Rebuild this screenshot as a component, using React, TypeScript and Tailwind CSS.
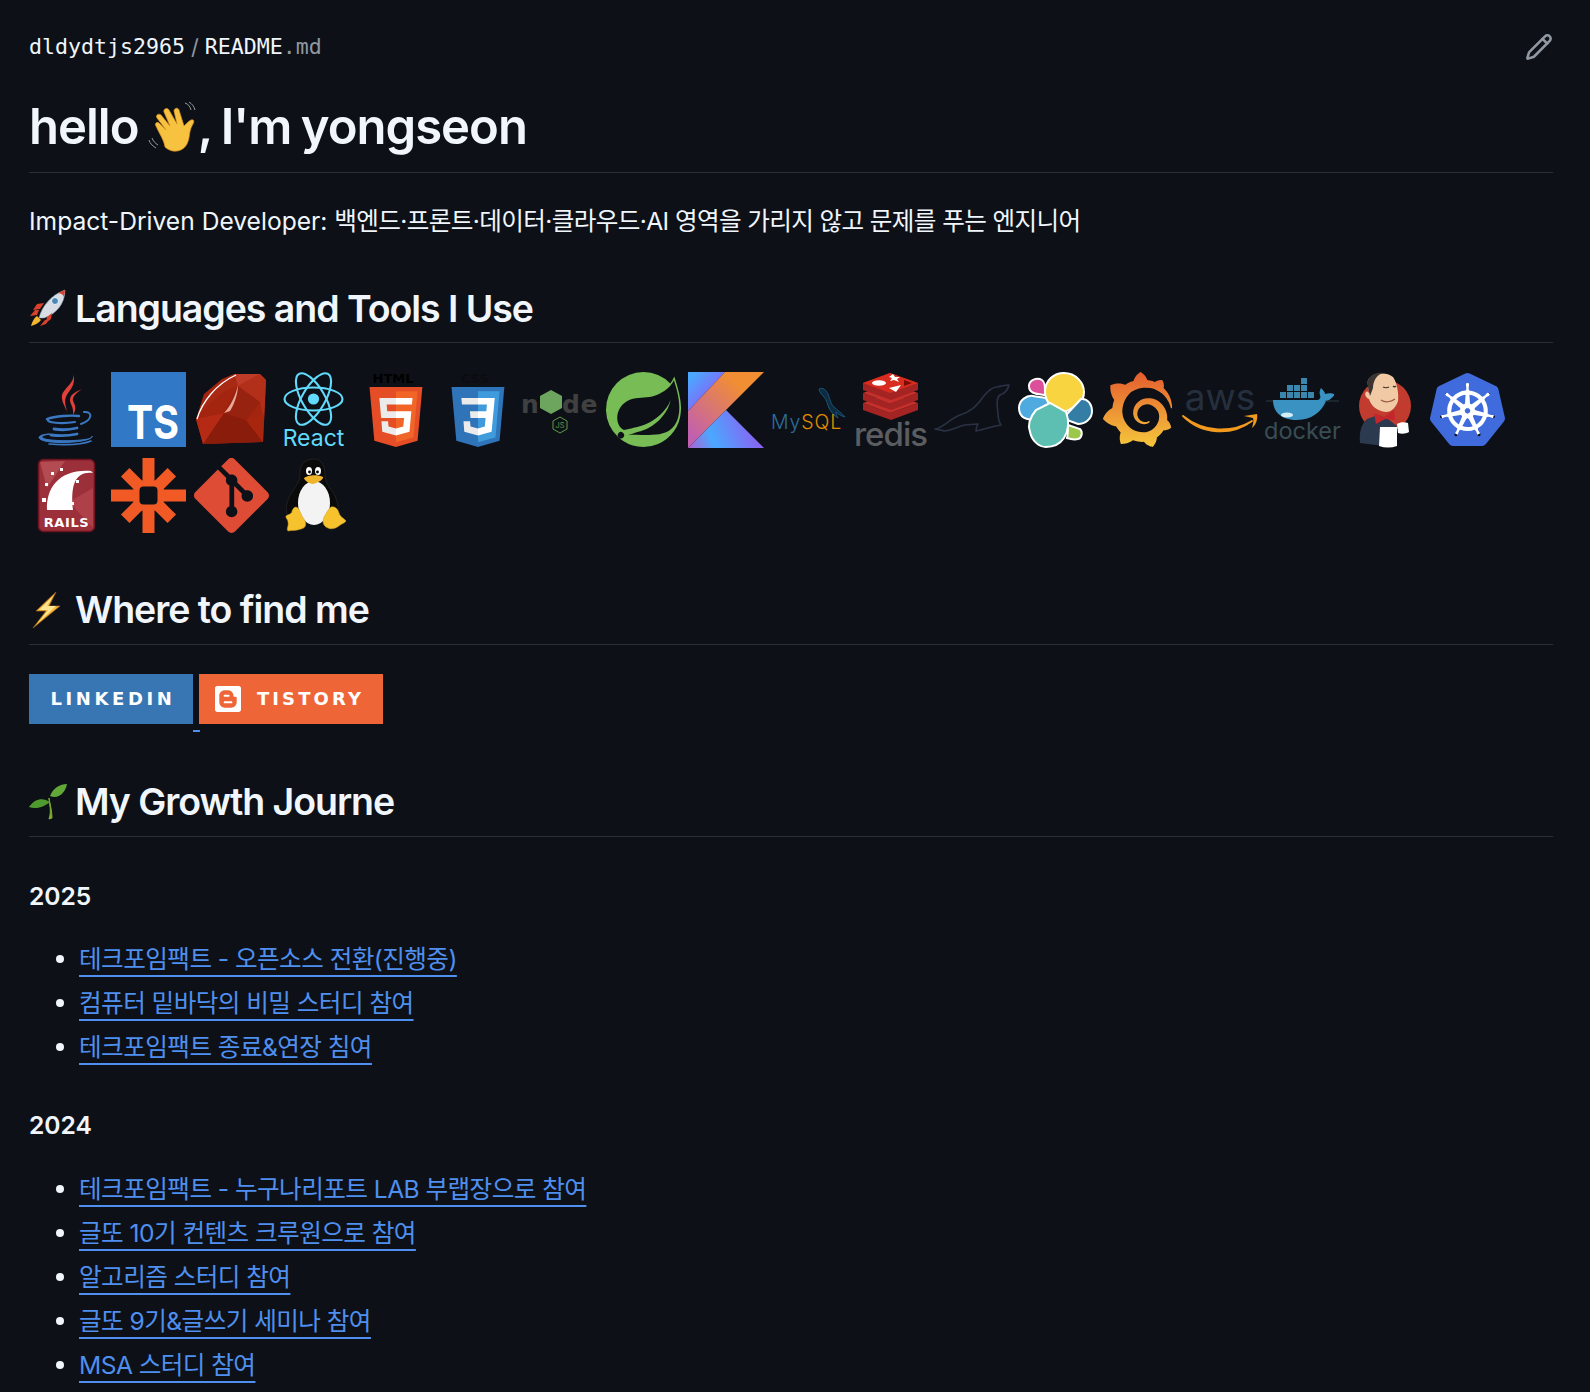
import React from "react";
import { Pencil } from "lucide-react";
import { SiBlogger, SiGit, SiGrafana, SiKubernetes, SiSpring } from "react-icons/si";

const Cell = ({ children }: { children: React.ReactNode }) => (
  <svg viewBox="0 0 75 75" className="w-[75px] h-[75px] shrink-0 overflow-visible">
    {children}
  </svg>
);

const JavaIcon = () => (
  <Cell>
    <path d="M44 1c3 9-9 15-11 22-1 6 3 11 5 17-1-6-3-10-1-15 2-6 11-11 7-24z" fill="#e2403a" />
    <path d="M53 17c-7 3-12 6-12 11 0 4 4 7 3 15 4-6 2-10 0-14-1-4 3-8 9-12z" fill="#e2403a" />
    <g fill="none" stroke="#3b78c2" strokeLinecap="round">
      <path d="M18 47c8-3 24-4 32-3" strokeWidth="2.4" />
      <path d="M55 40c8-1 10 7-3 12" strokeWidth="2" />
      <path d="M19 47c-3 4 14 5 27 3" strokeWidth="2.2" />
      <path d="M25 57c6 1 15 1 23-1" strokeWidth="2.8" />
      <path d="M22 63c8 1 17 1 26-1" strokeWidth="2.8" />
      <path d="M11 67c-4-3 4-5 10-5-7 1-11 3-5 5 12 3 50 2 47-3 1 7-46 9-52 3z" fill="#3b78c2" strokeWidth="1" />
      <path d="M20 72c13 1 32 1 42-3" strokeWidth="1.6" />
    </g>
  </Cell>
);

const TsIcon = () => (
  <Cell>
    <rect x="0" y="0" width="75" height="75" fill="#3178c6" />
    <text x="16" y="67" fontSize="46" fontWeight="700" fill="#fff" textLength="52" lengthAdjust="spacingAndGlyphs" className="font-['Inter',sans-serif]">
      TS
    </text>
  </Cell>
);

const RubyIcon = () => (
  <Cell>
    <polygon points="40,2 66,2 72,8 69,70 9,72 2,47 10,22 28,7" fill="#a3240f" />
    <polygon points="9,72 30,41 52,48 69,70" fill="#8a1c0c" />
    <polygon points="30,41 44,14 66,30 52,48" fill="#97220f" />
    <polygon points="44,14 66,2 72,8 70,50 66,30" fill="#b22f1a" />
    <polygon points="2,47 30,41 9,72" fill="#b52a14" />
    <polygon points="52,48 70,42 69,70" fill="#a8260e" />
    <polygon points="40,2 66,2 44,14" fill="#bd3c28" />
    <path d="M3 46C7 30 20 12 40 3l4 11C28 18 12 34 3 46z" fill="#a92a14" />
    <path d="M3 47C8 30 22 12 42 3" fill="none" stroke="#fff" strokeWidth="1.3" />
    <path d="M44 13c-2 10-8 22-14 28l6-2c5-8 8-18 8-26z" fill="#e9a898" />
  </Cell>
);

const ReactIcon = () => (
  <Cell>
    <g fill="none" stroke="#61dafb" strokeWidth="2.1" transform="translate(37.5 27)">
      <ellipse rx="29" ry="11.5" />
      <ellipse rx="29" ry="11.5" transform="rotate(60)" />
      <ellipse rx="29" ry="11.5" transform="rotate(120)" />
    </g>
    <circle cx="37.5" cy="27" r="5.6" fill="#61dafb" />
    <text x="37.5" y="74" textAnchor="middle" fontSize="23" fill="#61dafb" className="font-['Inter',sans-serif]">
      React
    </text>
  </Cell>
);

const HtmlIcon = () => (
  <Cell>
    <text x="34" y="11" textAnchor="middle" fontSize="13" fontWeight="700" fill="#000" className="font-['DejaVu_Sans',sans-serif]">
      HTML
    </text>
    <g transform="translate(7 15) scale(0.1172 0.117)">
      <path fill="#e44d26" d="M71 460L30 0h451l-41 460-185 52" />
      <path fill="#f16529" d="M256 472l149-41 35-394H256" />
      <path fill="#ebebeb" d="M256 208h-75l-5-58h80V94H114l15 171h127zm0 147l-64-17-4-45h-56l7 89 117 32z" />
      <path fill="#fff" d="M255 208v57h70l-7 73-63 17v59l116-32 16-174zm0-114v56h137l5-56z" />
    </g>
  </Cell>
);

const CssIcon = () => (
  <Cell>
    <text x="34" y="11" textAnchor="middle" fontSize="13" fontWeight="700" fill="#0a0c10" className="font-['DejaVu_Sans',sans-serif]">
      CSS
    </text>
    <g transform="translate(7 15) scale(0.1172 0.117)">
      <path fill="#2f73b8" d="M71 460L30 0h451l-41 460-185 52" />
      <path fill="#3f9bdc" d="M256 472l149-41 35-394H256" />
      <path fill="#ebebeb" d="M256 94H114l5 56h137zm0 114h-69l5 57h64zm0 147l-64-17-4-45h-56l7 89 117 32z" />
      <path fill="#fff" d="M256 94v56h76l-5 58h-71v57h65l-7 73-58 17v59l116-32 27-288z" />
    </g>
  </Cell>
);

const NodeIcon = () => (
  <Cell>
    <g fill="#404040" fontSize="25" fontWeight="700" className="font-['DejaVu_Sans',sans-serif]">
      <text x="-2" y="41">n</text>
      <text x="39" y="41">d</text>
      <text x="57.5" y="41">e</text>
    </g>
    <polygon points="28,18 39,24 39,36 28,42 17,36 17,24" fill="#6da55f" />
    <polygon points="37,45 44,49 44,57 37,61 30,57 30,49" fill="none" stroke="#5c9a46" strokeWidth="1" />
    <text x="37" y="56" textAnchor="middle" fontSize="7.5" fill="#5c9a46" className="font-['Inter',sans-serif]">
      JS
    </text>
  </Cell>
);

const KotlinIcon = () => (
  <Cell>
    <defs>
      <linearGradient id="kotlinTop" x1="0" y1="0" x2="1" y2="1">
        <stop offset="0.1" stopColor="#4aa8ff" />
        <stop offset="0.6" stopColor="#7f6cf9" />
      </linearGradient>
      <linearGradient id="kotlinBand" x1="1" y1="0" x2="0" y2="1">
        <stop offset="0.25" stopColor="#f18e33" />
        <stop offset="0.9" stopColor="#c15fb0" />
      </linearGradient>
      <linearGradient id="kotlinLow" x1="0" y1="1" x2="1" y2="0.8">
        <stop offset="0" stopColor="#b05fd0" />
        <stop offset="0.35" stopColor="#4aa8ff" />
        <stop offset="0.95" stopColor="#8a62f2" />
      </linearGradient>
    </defs>
    <polygon points="0,0 37,0 0,39" fill="url(#kotlinTop)" />
    <polygon points="37,0 76,0 38,38 0,76 0,39" fill="url(#kotlinBand)" />
    <polygon points="0,76 38,38 76,76" fill="url(#kotlinLow)" />
  </Cell>
);

const MysqlIcon = () => (
  <Cell>
    <path d="M48 17c4-2 7 1 9 5 2 5 2 9 6 13 3 3 8 6 11 10-4-1-7-3-9-5 0 2 1 4 2 6-4-2-7-6-9-10-2-4-2-8-5-11-2-2-4-4-5-8z" fill="#0d2c42" stroke="#1d5f88" strokeWidth="0.8" />
    <text x="0" y="57" fontSize="19.5" letterSpacing="0.9" fontWeight="300" className="font-['Inter',sans-serif]">
      <tspan fill="#2b6e9e">My</tspan>
      <tspan fill="#e48e00">SQL</tspan>
    </text>
  </Cell>
);

const RedisIcon = () => (
  <Cell>
    <g>
      <path d="M10 31l27 10 28-10v7L38 48 10 38z" fill="#a32422" />
      <path d="M10 31l27-10 28 10-28 10z" fill="#c6302b" />
      <path d="M10 21l27 10 28-10v7L38 38 10 28z" fill="#a32422" />
      <path d="M10 21l27-10 28 10-28 10z" fill="#c6302b" />
      <path d="M10 11L37 1l28 10v7L38 28 10 18z" fill="#a32422" />
      <path d="M10 11L37 1l28 10-28 10z" fill="#d82c20" />
      <ellipse cx="26" cy="11" rx="7" ry="2.8" fill="#fff" />
      <polygon points="40,2 42,5 47,5 44,7 46,10 41,8 37,9 39,6 36,5" fill="#fff" />
      <polygon points="36,16 48,13 43,20" fill="#fff" />
      <polygon points="51,8 59,11 51,14" fill="#7a0c00" />
    </g>
    <text x="37.5" y="74" textAnchor="middle" fontSize="33" fontWeight="500" fill="#5b5d61" letterSpacing="-1" className="font-['Inter',sans-serif]">
      redis
    </text>
  </Cell>
);

const MariadbIcon = () => (
  <Cell>
    <path
      d="M0 57c8-1 16-11 25-14 10-3 16-8 23-18 4-5 9-10 14-10 5-1 9-2 12-2-1 4-3 8-9 10-4 3-3 10-2 18 0 4 1 9 3 12-7 1-16 4-25 6 0-2 1-5 2-7-5 0-9 1-13 1-6 1-12 5-21 6-2-1-5-1-9-2z"
      fill="none"
      stroke="#2a3144"
      strokeWidth="1.6"
      strokeLinejoin="round"
    />
  </Cell>
);

const ElasticIcon = () => (
  <Cell>
    <g stroke="#fff" strokeWidth="2">
      <path d="M11 14c0-6 8-9 13-6 3 2 3 6 3 15-8-1-16-1-16-9z" fill="#dd4f9a" />
      <path d="M1 36c0-8 8-13 14-12 5 1 9 1 13 2l4 7-14 14C8 49 1 45 1 36z" fill="#4faadf" />
      <path d="M27 20C27 8 36 1 46 1c12 0 20 10 20 19 0 6-3 10-5 12L45 41 32 33c-3-4-5-8-5-13z" fill="#f9d441" />
      <path d="M49 42l14-15c7-1 11 6 11 12 0 8-7 13-14 13l-11-4z" fill="#347ea6" />
      <path d="M12 60c-3-8 1-16 6-22l14-7 16 9c3 8 3 18-2 26-4 6-11 9-18 9-7 0-14-6-16-15z" fill="#5cbfb2" />
      <path d="M50 53l12 4c3 3 2 9-2 10-4 1-8 0-11-1 1-4 1-9 1-13z" fill="#9bc74b" />
    </g>
  </Cell>
);

const GrafanaIcon = () => (
  <Cell>
    <defs>
      <linearGradient id="grafanaFill" x1="0" y1="0" x2="0" y2="1">
        <stop offset="0" stopColor="#e45c2e" />
        <stop offset="1" stopColor="#f5c73c" />
      </linearGradient>
    </defs>
    <SiGrafana x="0" y="0" width="75" height="75" size={75} fill="url(#grafanaFill)" color="#e8702e" />
  </Cell>
);

const AwsIcon = () => (
  <Cell>
    <text x="38" y="38" textAnchor="middle" fontSize="37" fill="#252f3e" className="font-['Inter',sans-serif]">
      aws
    </text>
    <path d="M1 44c21 17 49 17 69 5-20 15-50 14-69-5z" fill="#f29a1f" stroke="#f29a1f" strokeWidth="1.8" strokeLinejoin="round" />
    <path d="M62 44l13-2c1 5-1 11-5 14 1-4 2-7 1-10z" fill="#f29a1f" />
  </Cell>
);

const DockerIcon = () => (
  <Cell>
    <g fill="#3a86ac">
      <rect x="15" y="20" width="6" height="6" />
      <rect x="22" y="20" width="6" height="6" />
      <rect x="29" y="20" width="6" height="6" />
      <rect x="36" y="20" width="6" height="6" />
      <rect x="43" y="20" width="6" height="6" />
      <rect x="22" y="13" width="6" height="6" />
      <rect x="29" y="13" width="6" height="6" />
      <rect x="36" y="13" width="6" height="6" />
      <rect x="36" y="6" width="6" height="6" />
    </g>
    <path d="M8 28h45c2-1 3-2 2-5-1-3 0-5 1-7 2 2 4 4 4 6 3-1 7-1 9 0 1 1-3 6-8 7-4 10-14 19-29 19C14 48 8 38 8 28z" fill="#3a92c2" />
    <path d="M1 29h7M60 29h14" stroke="#3a4a52" strokeWidth="0.7" />
    <ellipse cx="22" cy="43" rx="6" ry="2.5" fill="#d4eef7" />
    <text x="37.5" y="67" textAnchor="middle" fontSize="23.5" fill="#394d54" className="font-['Inter',sans-serif]">
      docker
    </text>
  </Cell>
);

const JenkinsIcon = () => (
  <Cell>
    <circle cx="38" cy="34" r="26" fill="#c13b2f" />
    <path d="M20 47c-6 5-8 14-7 24l24 3 9-2 4-18-9-7-10-4z" fill="#2c3a4f" />
    <path d="M21 8c4-7 18-9 25-3 4 5 6 17 5 24-2 6-6 11-12 11-9-1-15-6-17-13-3-1-5-5-3-7 1-1 2 0 3 1 0-4-2-9-1-13z" fill="#f1c9a5" />
    <path d="M21 8c3-6 9-8 15-7-7 2-10 9-10 15l-3 8c-1-5-3-11-2-16z" fill="#3a3530" />
    <path d="M36 15c2 1 4 1 6 0M46 14c1 1 2 1 3 0" fill="none" stroke="#3a3530" strokeWidth="1.2" />
    <path d="M34 28c4 3 10 2 14-1" fill="none" stroke="#9a5a44" strokeWidth="1.2" />
    <polygon points="27,41 37,45 47,38 48,48 38,47 29,52" fill="#c4262b" />
    <path d="M33 55h17v19c-6 2-12 2-18 0z" fill="#fff" />
    <path d="M50 52c3-2 8-2 11-1l1 9c-3 2-8 2-11 1z" fill="#fff" />
  </Cell>
);

const KubernetesIcon = () => (
  <Cell>
    <circle cx="37.5" cy="37.5" r="27" fill="#fff" />
    <SiKubernetes x="0" y="0" width="75" height="75" size={75} color="#3f6bdc" />
  </Cell>
);

const RailsIcon = () => (
  <Cell>
    <rect x="9.5" y="1.5" width="56" height="72" rx="5" fill="#9b2f3a" stroke="#6e1220" strokeWidth="1.5" />
    <polygon points="11,4 36,3 18,30" fill="#b34c52" />
    <polygon points="40,44 64,30 64,70" fill="#ad4048" />
    <path d="M18 52c-1-22 12-41 44-39l2 2c-16-2-23 9-20 37z" fill="#fff" />
    <g fill="#fff">
      <rect x="31" y="10" width="3" height="3" />
      <rect x="22" y="14" width="3" height="3" />
      <rect x="16" y="25" width="3" height="3" />
      <rect x="13" y="40" width="4" height="4" />
      <rect x="47" y="22" width="3" height="3" />
      <rect x="41" y="27" width="3" height="3" />
      <rect x="40" y="34" width="3" height="3" />
      <rect x="42" y="44" width="3" height="3" />
    </g>
    <text x="37.5" y="69" textAnchor="middle" fontSize="13" fontWeight="700" fill="#fff" letterSpacing="0.6" className="font-['DejaVu_Sans',sans-serif]">
      RAILS
    </text>
  </Cell>
);

const ZapierIcon = () => (
  <Cell>
    <g fill="#f15a24" transform="translate(37.5 37.5)">
      <rect x="-37.5" y="-6" width="75" height="12" />
      <rect x="-6" y="-37.5" width="12" height="75" />
      <rect x="-33" y="-6" width="66" height="12" transform="rotate(45)" />
      <rect x="-33" y="-6" width="66" height="12" transform="rotate(135)" />
      <rect x="-15" y="-15" width="30" height="30" />
    </g>
    <rect x="28.5" y="28.5" width="18" height="18" rx="4" fill="#0d1117" />
  </Cell>
);

const TuxIcon = () => (
  <Cell>
    <path d="M38 1c-10 0-15 7-14 17 0 8-8 13-12 24-3 9-2 17 5 23l41-1c6-8 5-17 1-26-4-8-10-12-10-21 0-8-3-16-11-16z" fill="#0a0a0a" stroke="#333" strokeWidth="0.5" />
    <ellipse cx="38" cy="45" rx="16" ry="22" fill="#f3f3f3" />
    <ellipse cx="33" cy="13" rx="3" ry="4" fill="#fff" />
    <ellipse cx="42" cy="13" rx="3" ry="4" fill="#fff" />
    <circle cx="33.5" cy="14" r="1.4" fill="#000" />
    <circle cx="41.5" cy="14" r="1.4" fill="#000" />
    <path d="M28 20c3-3 14-4 19-1 1 2-5 6-10 7-4 0-9-4-9-6z" fill="#f0b42b" />
    <path d="M20 49c4 1 4 7 8 12 3 5 2 9-3 10-5 2-9 1-13 2-2-2 1-5 0-9 0-3-3-4-2-6 3-2 6-2 6-5 1-2 2-4 4-4z" fill="#f6c32f" stroke="#caa020" strokeWidth="0.5" />
    <path d="M55 49c-3 2-5 7-7 10-2 5-1 9 4 11 4 2 8 0 11-2 2-2 6-3 7-5-2-3-6-4-7-8-1-3-3-7-8-6z" fill="#f6c32f" stroke="#caa020" strokeWidth="0.5" />
  </Cell>
);

const WaveEmoji = () => (
  <svg viewBox="0 0 50 50" className="inline-block w-[50px] h-[50px] align-[-8px]">
    <path d="M37 1c3 1 5 3 6 7M41 0c3 2 5 4 6 8M4 36c1 3 3 5 6 7M1 38c1 4 4 6 7 8" fill="none" stroke="#9a9a9a" strokeWidth="1" />
    <path d="M8 24c-2-2 1-5 3-3l7 7-9-12c-2-3 2-5 4-3l9 11-6-14c-1-3 3-5 5-2l8 14-3-13c0-3 4-4 5-1l5 16c4-4 7-7 9-6 2 1 0 4-2 8-2 5-1 10-4 16-5 9-16 9-22 3C16 38 11 31 8 24z" fill="#f7c23f" stroke="#d98f1e" strokeWidth="0.7" />
  </svg>
);

const RocketEmoji = () => (
  <svg viewBox="0 0 38 38" className="w-[38px] h-[38px] shrink-0">
    <path d="M6 21l-5 6 7-1 2-5zM16 31l-5 6 6-2 3-5z" fill="#d9412b" />
    <path d="M8 27c-3 2-5 6-6 10 4-1 8-3 10-6z" fill="#f5b52e" />
    <path d="M10 29C13 17 22 6 36 1c0 14-9 24-21 28z" fill="#d7dde3" stroke="#8ea3b5" strokeWidth="0.5" />
    <path d="M29 4c2 0 5 1 6 4l1-7z" fill="#d9412b" />
    <circle cx="26" cy="12" r="3.5" fill="#4a88b5" stroke="#eef" strokeWidth="1" />
    <path d="M11 20l-7 1 4-6 7-1zM18 28l-1 6 5-4 1-6z" fill="#d9412b" />
  </svg>
);

const BoltEmoji = () => (
  <svg viewBox="0 0 38 38" className="w-[38px] h-[38px] shrink-0">
    <polygon points="27,1 7,20 17,20 4,37 31,15 20,15" fill="#f6b73c" stroke="#a0601a" strokeWidth="0.7" />
    <polygon points="24,5 10,19 19,19 9,32 27,15 18,15" fill="#fde68f" />
  </svg>
);

const SeedEmoji = () => (
  <svg viewBox="0 0 38 38" className="w-[38px] h-[38px] shrink-0">
    <path d="M20 36c3-9 0-15 0-21 1 6 3 13 3 20z" fill="#79ad32" stroke="#79ad32" strokeWidth="1" />
    <path d="M21 19C1 12 6 25 0 24c5-7 14-8 21-5z" fill="#3f8d2b" />
    <path d="M0 24c7-10 15-9 21-5-5 4-13 8-21 5z" fill="#4e9a2f" />
    <path d="M21 13C24 5 31 1 38 1c-1 7-8 16-17 12z" fill="#62a838" />
  </svg>
);

// inline-block + overflow-hidden puts the baseline at the badge's bottom edge
const Badge = ({ label, icon, className }: { label: string; icon?: React.ReactNode; className: string }) => (
  <span className={`inline-block overflow-hidden h-[50px] text-white text-[18px] font-bold font-['DejaVu_Sans',sans-serif] ${className}`}>
    <span className="flex items-center h-full">
      {icon}
      {label}
    </span>
  </span>
);

const SectionTitle = ({ icon, title, className }: { icon: React.ReactNode; title: string; className: string }) => (
  <h2 className={`flex items-center gap-[8px] h-[57px] pb-[12px] border-b border-[#2a2f36] text-[37.5px] leading-[45px] font-semibold tracking-[-1.05px] text-[#f0f6fc] ${className}`}>
    {icon}
    <span>{title}</span>
  </h2>
);

const LinkItem = ({ text }: { text: string }) => (
  <li className="relative h-[38px] leading-[38px] mb-[6px] pl-[50px] before:content-[''] before:absolute before:left-[27px] before:top-[15px] before:w-[8px] before:h-[8px] before:rounded-full before:bg-[#f0f6fc]">
    <a className="text-[#4f8fef] tracking-[-0.55px] underline decoration-[2px] underline-offset-[7px] [text-decoration-skip-ink:none]">{text}</a>
  </li>
);

const list2025 = ["테크포임팩트 - 오픈소스 전환(진행중)", "컴퓨터 밑바닥의 비밀 스터디 참여", "테크포임팩트 종료&연장 침여"];
const list2024 = ["테크포임팩트 - 누구나리포트 LAB 부랩장으로 참여", "글또 10기 컨텐츠 크루원으로 참여", "알고리즘 스터디 참여", "글또 9기&글쓰기 세미나 참여", "MSA 스터디 참여"];

export default function App() {
  return (
    <div className="h-[1392px] overflow-hidden bg-[#0d1117] pl-[29px] pr-[37px] text-[#f0f6fc] text-[24.6px] font-['Inter','Noto_Sans_CJK_KR',sans-serif]">
      <div className="flex items-center justify-between pt-[30px] h-[64px]">
        <div className="flex items-center text-[21.6px] font-['DejaVu_Sans_Mono',monospace]">
          <span>dldydtjs2965</span>
          <span className="mx-[6px] text-[#9198a1] font-['Inter',sans-serif]">/</span>
          <span>README</span>
          <span className="text-[#9198a1]">.md</span>
        </div>
        <Pencil size={28} strokeWidth={2.2} className="text-[#9198a1]" />
      </div>

      <h1 className="mt-[33px] h-[76px] border-b border-[#2a2f36] text-[49px] leading-[60px] font-semibold tracking-[-1px] [word-spacing:-2px]">
        hello <WaveEmoji />, I'm yongseon
      </h1>

      <p className="mt-[29px] leading-[38px]">
        Impact-Driven Developer: <span className="tracking-[-0.62px]">백엔드·프론트·데이터·클라우드·AI 영역을 가리지 않고 문제를 푸는 엔지니어</span>
      </p>

      <SectionTitle icon={<RocketEmoji />} title="Languages and Tools I Use" className="mt-[46px]" />
      <div className="flex flex-wrap gap-x-[7.4px] gap-y-[10.5px] mt-[29px]">
        <JavaIcon />
        <TsIcon />
        <RubyIcon />
        <ReactIcon />
        <HtmlIcon />
        <CssIcon />
        <NodeIcon />
        <SiSpring size={75} color="#77bc55" className="shrink-0" />
        <KotlinIcon />
        <MysqlIcon />
        <RedisIcon />
        <MariadbIcon />
        <ElasticIcon />
        <GrafanaIcon />
        <AwsIcon />
        <DockerIcon />
        <JenkinsIcon />
        <KubernetesIcon />
        <RailsIcon />
        <ZapierIcon />
        <SiGit size={75} color="#de4c36" className="shrink-0" />
        <TuxIcon />
      </div>

      <SectionTitle icon={<BoltEmoji />} title="Where to find me" className="mt-[55px]" />
      <p className="mt-[29px] h-[50px] leading-[30px] whitespace-nowrap">
        <a className="text-[#4f8fef] underline decoration-[2px] underline-offset-[6px]">
          <Badge label="LINKEDIN" className="bg-[#3776b3] w-[164px] pl-[4px] tracking-[3.6px] [&>span]:justify-center" />{" "}
        </a>
        <a>
          <Badge label="TISTORY" className="bg-[#ee6538] w-[184px] pl-[16px] -ml-px tracking-[3.1px]" icon={<SiBlogger size={26} className="mr-[16px]" />} />
        </a>
      </p>

      <SectionTitle icon={<SeedEmoji />} title="My Growth Journe" className="mt-[56px]" />

      <h3 className="mt-[41px] leading-[37px] font-semibold">2025</h3>
      <ul className="mt-[25px]">
        {list2025.map((item) => (
          <LinkItem key={item} text={item} />
        ))}
      </ul>
      <h3 className="mt-[41px] leading-[37px] font-semibold">2024</h3>
      <ul className="mt-[26px]">
        {list2024.map((item) => (
          <LinkItem key={item} text={item} />
        ))}
      </ul>
    </div>
  );
}
